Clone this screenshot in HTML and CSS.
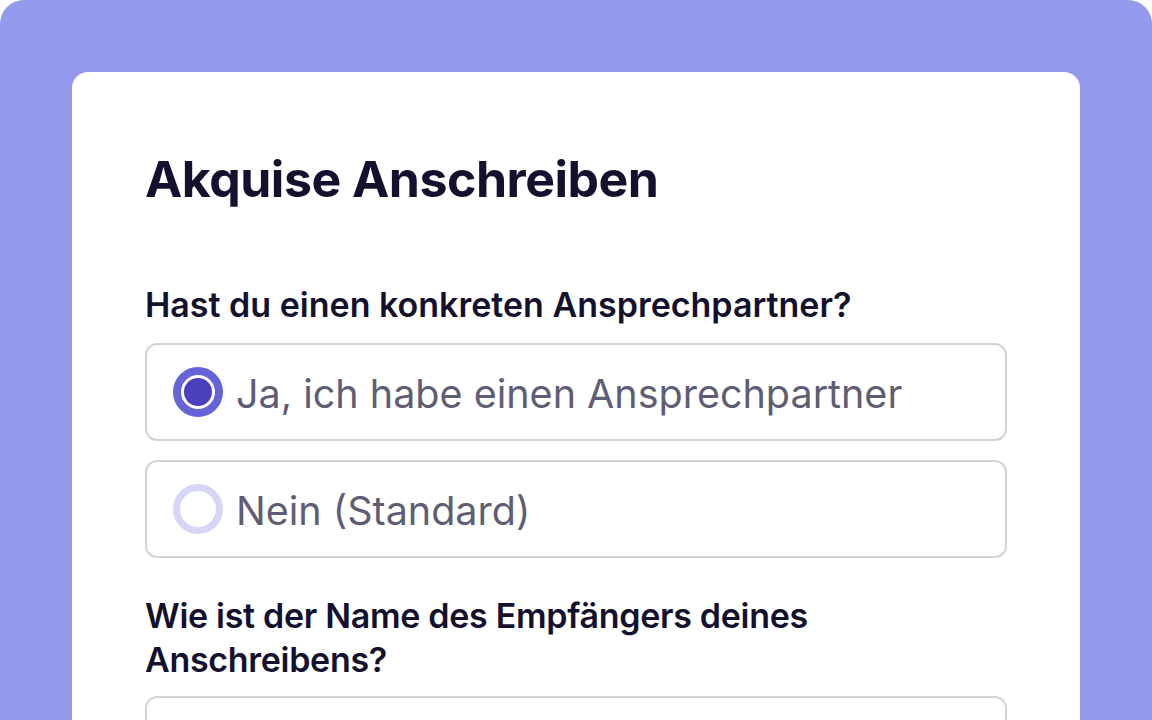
FILE: index.html
```html
<!DOCTYPE html>
<html lang="de">
<head>
  <meta charset="UTF-8">
  <meta name="viewport" content="width=device-width, initial-scale=1.0">
  <title>Akquise Anschreiben</title>
  <link rel="stylesheet" href="styles.css">
</head>
<body>

  <div class="frame">
    <main class="card">
      <h1>Akquise Anschreiben</h1>

      <!-- Frage 1 -->
      <div class="field">
        <p class="label">Hast du einen konkreten Ansprechpartner?</p>
        <label class="option">
          <span class="radio checked"></span>
          <span class="option-text">Ja, ich habe einen Ansprechpartner</span>
        </label>
        <label class="option">
          <span class="radio"></span>
          <span class="option-text">Nein (Standard)</span>
        </label>
      </div>

      <!-- Frage 2 -->
      <div class="field">
        <p class="label label-wide">Wie ist der Name des Empfängers deines<br>Anschreibens?</p>
        <div class="input"></div>
      </div>
    </main>
  </div>

</body>
</html>
```

FILE: styles.css
```css
html, body {
  margin: 0;
  background-color: #fff;
  font-family: Inter, "Noto Sans", sans-serif;
  color: #14112e;
  overflow: hidden;
}
.frame {
  background-color: #9399eb;
  border-radius: 24px 24px 0 0;
  height: 720px;
  padding: 72px 72px 0;
  box-sizing: border-box;
  overflow: hidden;
}
.card {
  background-color: #fff;
  border-radius: 16px;
  height: 700px;
  padding: 77px 73px 0;
}
h1 {
  margin: 0 0 75px;
  font-size: 50px;
  font-weight: 700;
  line-height: 60px;
  letter-spacing: -0.5px;
}
.field {
  margin-bottom: 36px;
}
.label {
  margin: 0 0 17px;
  font-size: 34px;
  font-weight: 600;
  line-height: 42px;
}
.label-wide {
  margin-bottom: 14px;
  line-height: 44px;
  letter-spacing: -0.3px;
}
.option {
  display: flex;
  align-items: center;
  gap: 13px;
  box-sizing: border-box;
  height: 98px;
  margin-bottom: 19px;
  padding: 0 26px;
  border: 2px solid #d3d3d6;
  border-radius: 12px;
  font-size: 39.5px;
  color: #5e5d73;
}
.option:last-child {
  margin-bottom: 0;
}
.option-text {
  padding-top: 4px;
}
.radio {
  box-sizing: border-box;
  width: 50px;
  height: 50px;
  border: 7px solid #d6d6f6;
  border-radius: 50%;
  flex: none;
  position: relative;
}
.radio.checked {
  border: 8px solid #6464d8;
}
.radio.checked::after {
  content: "";
  position: absolute;
  top: 3px;
  left: 3px;
  width: 28px;
  height: 28px;
  border-radius: 50%;
  background-color: #4a3fbd;
}
.input {
  box-sizing: border-box;
  height: 98px;
  border: 2px solid #d3d3d6;
  border-radius: 12px;
}
```
